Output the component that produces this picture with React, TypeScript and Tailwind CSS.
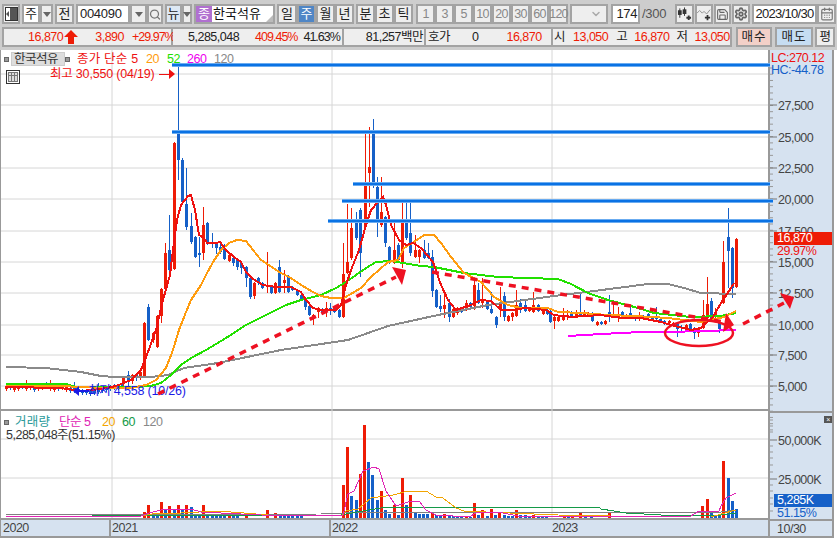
import React from "react";
import { CalendarDays, ChevronDown, Save, Search, Settings } from "lucide-react";

const RED = "#ee1c06";
const BLUE = "#1560c8";

// [x, bodyTop, bodyBottom, wickTop, wickBottom, color]
type Candle = [number, number, number, number, number, "r" | "b"];

const flatYs = [387, 386, 388, 387, 385, 387, 386, 388, 387, 386, 384, 387, 388, 387, 386, 388, 389, 389, 390, 391, 391, 392, 391, 390, 389, 388, 387, 386, 386, 385];
const flatCandles: Candle[] = flatYs.map((y, i) => [5 + i * 4.0, y - 1, y + 2, i % 6 === 5 ? y - 7 : y - 2, y + 4, i % 3 === 1 || i > 15 ? "b" : "r"]);

const candles: Candle[] = [
  ...flatCandles,
  [122, 377, 383, 376, 386, "r"], [127, 375, 380, 371, 386, "b"], [131, 375, 381, 374, 384, "r"], [135, 375, 378, 373, 381, "b"],
  [139, 372, 377, 371, 380, "r"], [143, 323, 377, 322, 378, "r"], [147, 307, 340, 304, 341, "b"], [152, 333, 340, 332, 343, "r"],
  [156, 316, 347, 315, 348, "r"], [160, 289, 316, 288, 323, "r"], [164, 253, 289, 243, 291, "r"], [168, 250, 270, 215, 277, "b"],
  [173, 143, 269, 142, 270, "r"], [177, 132, 160, 67, 180, "b"], [181, 160, 202, 158, 205, "b"], [185, 204, 227, 168, 230, "b"],
  [190, 226, 242, 213, 244, "b"], [194, 237, 257, 236, 258, "b"], [198, 253, 255, 237, 267, "b"], [202, 225, 253, 207, 260, "r"],
  [206, 223, 243, 222, 245, "b"], [211, 242, 244, 233, 248, "b"], [215, 243, 248, 242, 254, "b"], [219, 247, 252, 243, 254, "b"],
  [223, 248, 259, 244, 260, "b"], [228, 255, 261, 254, 262, "r"], [232, 258, 263, 257, 266, "b"], [236, 260, 267, 258, 270, "b"],
  [240, 263, 268, 262, 274, "b"], [245, 267, 278, 266, 287, "b"], [249, 278, 297, 277, 299, "b"], [253, 283, 296, 282, 299, "r"],
  [257, 278, 283, 277, 285, "b"], [261, 283, 288, 282, 289, "b"], [266, 285, 287, 252, 293, "r"], [270, 287, 293, 286, 294, "b"],
  [274, 283, 293, 282, 294, "r"], [278, 267, 292, 260, 293, "b"], [283, 280, 283, 270, 293, "r"], [287, 277, 292, 275, 293, "b"],
  [291, 288, 290, 286, 291, "b"], [296, 290, 295, 289, 296, "b"], [300, 295, 299, 294, 300, "b"], [304, 298, 307, 297, 310, "b"],
  [308, 306, 315, 305, 316, "b"], [312, 315, 318, 314, 325, "r"], [317, 308, 312, 307, 318, "r"], [321, 309, 312, 308, 314, "b"],
  [325, 308, 310, 302, 317, "r"], [329, 308, 311, 303, 315, "b"], [333, 307, 312, 306, 313, "b"], [338, 310, 317, 309, 318, "b"],
  [342, 274, 317, 243, 318, "r"], [346, 262, 273, 204, 274, "r"], [350, 228, 258, 208, 260, "r"], [355, 221, 238, 212, 240, "b"],
  [359, 210, 253, 208, 277, "b"], [364, 182, 227, 133, 229, "r"], [368, 167, 173, 127, 207, "r"], [372, 133, 183, 119, 188, "b"],
  [376, 187, 219, 177, 237, "b"], [380, 212, 225, 177, 227, "r"], [384, 217, 243, 216, 247, "b"], [388, 247, 263, 246, 264, "b"],
  [393, 250, 263, 223, 264, "r"], [397, 245, 260, 243, 262, "b"], [401, 219, 264, 202, 268, "r"], [405, 219, 238, 203, 240, "b"],
  [409, 233, 253, 202, 256, "b"], [414, 250, 257, 235, 258, "r"], [418, 250, 257, 249, 263, "r"], [423, 250, 258, 240, 259, "b"],
  [427, 253, 258, 243, 259, "b"], [431, 257, 291, 250, 297, "b"], [435, 290, 307, 289, 308, "b"], [439, 306, 309, 295, 312, "b"],
  [443, 305, 309, 293, 318, "r"], [448, 303, 317, 299, 322, "b"], [452, 309, 317, 308, 318, "r"], [456, 308, 313, 307, 315, "r"],
  [460, 308, 312, 307, 313, "b"], [465, 303, 309, 300, 311, "r"], [469, 303, 307, 302, 308, "b"], [473, 285, 306, 277, 310, "r"],
  [477, 290, 303, 283, 304, "b"], [481, 300, 303, 278, 308, "r"], [486, 301, 309, 300, 310, "b"], [490, 309, 313, 292, 314, "b"],
  [495, 317, 325, 316, 328, "b"], [499, 302, 310, 287, 317, "r"], [503, 296, 317, 292, 321, "b"], [507, 316, 321, 315, 322, "r"],
  [511, 313, 317, 312, 321, "r"], [515, 305, 316, 290, 317, "r"], [519, 303, 307, 299, 313, "b"], [524, 305, 311, 299, 312, "b"],
  [528, 309, 311, 308, 312, "r"], [532, 305, 312, 292, 313, "r"], [537, 305, 311, 304, 312, "b"], [542, 310, 314, 309, 315, "r"],
  [546, 310, 314, 309, 315, "b"], [549, 311, 322, 310, 323, "b"], [553, 317, 321, 316, 329, "r"], [557, 317, 321, 315, 322, "r"],
  [562, 316, 320, 308, 321, "r"], [566, 315, 317, 310, 320, "r"], [570, 312, 317, 311, 318, "b"], [575, 314, 316, 310, 318, "r"],
  [579, 314, 316, 292, 317, "b"], [583, 314, 316, 310, 317, "r"], [587, 314, 316, 312, 317, "r"], [591, 313, 321, 312, 322, "b"],
  [596, 322, 325, 321, 326, "r"], [600, 322, 324, 321, 325, "b"], [604, 321, 324, 320, 325, "r"], [608, 312, 317, 295, 322, "b"],
  [612, 314, 317, 303, 318, "r"], [617, 314, 317, 307, 322, "r"], [621, 312, 317, 311, 318, "b"], [625, 315, 317, 314, 318, "r"],
  [629, 313, 318, 307, 319, "b"], [634, 317, 319, 316, 321, "b"], [638, 317, 318, 312, 321, "r"], [642, 316, 318, 315, 319, "b"],
  [647, 314, 317, 313, 318, "b"], [651, 317, 319, 316, 320, "b"], [655, 317, 319, 307, 320, "b"], [659, 319, 322, 318, 323, "b"],
  [663, 321, 324, 320, 325, "b"], [668, 321, 323, 320, 325, "r"], [672, 323, 326, 322, 327, "r"], [676, 324, 329, 323, 337, "b"],
  [680, 327, 328, 325, 333, "b"], [685, 325, 330, 324, 331, "r"], [689, 324, 329, 323, 330, "b"], [693, 328, 333, 327, 339, "b"],
  [697, 328, 333, 327, 337, "r"], [702, 315, 328, 300, 329, "r"], [706, 304, 318, 277, 319, "r"], [710, 301, 318, 298, 319, "b"],
  [714, 313, 317, 308, 318, "r"], [718, 323, 329, 322, 333, "b"], [722, 262, 303, 241, 304, "r"], [727, 237, 251, 208, 288, "b"],
  [731, 248, 288, 247, 298, "b"], [735, 239, 287, 238, 288, "r"],
];

const ma5 = "5,387 60,388 80,391 100,389 115,386 130,380 140,370 147,352 155,330 162,300 169,275 172,250 176,220 180,205 187,196 190,195 194,210 198,235 203,238 206,243 215,243 219,242 225,250 233,257 240,262 245,272 252,279 262,285 275,287 290,287 300,292 305,300 312,308 320,310 335,310 340,305 345,285 350,270 358,250 365,225 370,210 377,202 382,197 385,205 390,225 398,240 405,245 412,243 420,248 432,262 440,285 447,300 455,310 470,305 480,300 490,301 500,310 510,310 525,308 545,310 553,315 570,317 600,315 620,318 640,318 660,322 670,325 690,330 700,328 712,317 720,303 730,288 733,283";
const ma20 = "5,386 60,386 100,388 130,388 145,385 155,380 165,368 172,350 178,330 185,312 190,300 200,285 205,275 212,262 220,250 228,243 236,240 245,241 252,250 260,260 268,265 278,272 290,278 300,285 312,292 320,296 330,298 343,298 360,288 370,277 387,262 397,260 403,248 413,242 423,235 433,235 440,243 450,257 463,273 480,282 493,297 507,305 520,308 547,308 557,312 580,313 607,315 633,316 667,318 700,322 723,317 735,311";
const ma52 = "5,384 65,384 75,387 115,387 135,387 150,386 160,383 170,375 180,365 190,358 205,350 225,338 245,325 265,315 285,305 300,300 320,295 335,288 345,282 355,275 365,268 375,262 390,261 420,266 433,267 463,273 497,277 557,279 570,284 587,293 607,300 637,308 653,313 690,317 720,316 735,313";
const ma120 = "5,367 45,368 80,372 100,376 113,377 150,377 167,375 183,368 217,363 280,350 347,340 387,326 437,315 487,305 553,296 593,291 647,284 667,284 683,288 700,293 735,294";
const ma260 = "567,336 600,334 640,332 667,332 735,330";

type Bar = [number, number, "r" | "b"];
const bars: Bar[] = [
  [143, 513, "r"], [147, 506, "r"], [152, 514, "b"], [156, 515, "b"], [160, 503, "r"], [164, 511, "b"], [168, 507, "r"], [173, 510, "b"],
  [177, 506, "r"], [181, 510, "b"], [185, 506, "r"], [190, 508, "b"], [194, 516, "b"], [198, 516, "b"], [202, 506, "r"], [206, 515, "b"],
  [211, 516, "b"], [215, 516, "b"], [219, 516, "b"], [223, 516, "b"], [228, 517, "r"], [232, 517, "b"], [236, 517, "b"], [245, 517, "r"],
  [266, 511, "r"], [274, 514, "r"], [279, 517, "b"], [283, 517, "b"], [287, 517, "b"], [291, 517, "b"], [296, 517, "b"], [300, 517, "b"],
  [342, 486, "r"], [346, 448, "r"], [350, 497, "b"], [355, 501, "b"], [359, 475, "r"], [363, 426, "r"], [367, 463, "b"], [371, 476, "b"],
  [376, 501, "b"], [380, 492, "r"], [384, 511, "b"], [388, 515, "b"], [393, 506, "r"], [397, 516, "b"], [401, 479, "r"], [405, 506, "b"],
  [409, 496, "r"], [414, 514, "b"], [418, 515, "b"], [422, 515, "b"], [426, 515, "b"], [431, 514, "r"], [435, 516, "b"], [439, 517, "b"],
  [443, 515, "r"], [448, 517, "b"], [452, 517, "b"], [456, 518, "b"], [460, 518, "b"], [465, 518, "r"], [469, 518, "b"], [473, 504, "r"],
  [477, 516, "b"], [481, 511, "r"], [486, 517, "b"], [490, 510, "r"], [494, 516, "b"], [498, 513, "r"], [503, 516, "b"], [507, 517, "b"],
  [511, 517, "b"], [515, 511, "r"], [519, 516, "b"], [524, 516, "b"], [528, 517, "b"], [532, 516, "r"], [537, 517, "b"], [541, 517, "b"],
  [545, 517, "b"], [579, 513, "r"], [608, 513, "r"], [563, 518, "r"], [567, 518, "b"], [571, 518, "r"], [584, 518, "b"], [590, 518, "b"],
  [701, 507, "r"], [706, 500, "r"], [710, 514, "b"], [714, 516, "b"], [718, 516, "b"], [722, 462, "r"], [727, 479, "b"], [731, 502, "b"], [735, 510, "b"],
];

const volMa5 = "5,517 140,517 148,514 160,511 175,510 190,510 200,513 220,514 260,516 340,517 342,516 347,495 353,492 362,472 373,468 378,470 385,492 395,507 410,502 418,502 425,511 435,516 468,518 475,514 497,513 517,517 690,517 698,512 718,512 720,507 725,499 735,494";
const volMa20 = "5,518 140,517 157,514 180,514 217,512 243,514 267,516 340,517 345,512 357,510 370,499 392,496 407,492 425,492 435,498 442,499 455,509 463,512 485,513 557,516 660,518 710,518 720,515 735,511";
const volMa60 = "91,517 340,516 367,511 387,508 598,508 600,510 613,512 625,514 660,516 692,517 720,516 735,514";
const volMa120 = "5,516 320,515 343,514 367,513 720,513 735,511";

const priceTicks: [number, string][] = [
  [105, "27,500"], [137, "25,000"], [168, "22,500"], [199, "20,000"], [231, "17,500"], [262, "15,000"], [293, "12,500"], [325, "10,000"], [355, "7,500"], [386, "5,000"],
];
const gridYs = [74, 105, 137, 168, 199, 231, 262, 293, 325, 355, 386];
const gridXs = [111, 331, 551];
const trendLines = [
  { y: 65, x: 172, end: 770 },
  { y: 132, x: 172, end: 770 },
  { y: 184, x: 353, end: 770 },
  { y: 201, x: 342, end: 773 },
  { y: 221, x: 328, end: 773 },
];
const minorTicks = Array.from({ length: 59 }, (_, i) => 68 + i * 6.24);

const Cell = ({ className = "", children }: { className?: string; children?: React.ReactNode }) => (
  <div className={`h-[20px] flex items-center justify-center border-2 border-[#a3a3a3] text-[#222] shrink-0 ${className.includes("bg-") ? "" : "bg-[#eeeeee]"} ${className}`}>
    {children}
  </div>
);

const Caret = () => <div className="w-0 h-0 border-x-[4px] border-x-transparent border-t-[5px] border-t-[#666]" />;

const CandleIcon = () => (
  <svg width="16" height="14" viewBox="0 0 16 14">
    <path d="M3 1v10M8 0v9" stroke="#333" />
    <rect x="1" y="3" width="4" height="5" fill="#333" />
    <rect x="6" y="2" width="4" height="5" fill="#333" />
    <path d="M10 11h5M12.500 8.500v5" stroke="#333" strokeWidth="2" />
  </svg>
);

const LineIcon = () => (
  <svg width="16" height="14" viewBox="0 0 16 14" fill="none">
    <path d="M0 6l3-3 3 3 2-2 3 3 4-5" stroke="#888" />
    <path d="M9 11h6M12 8v6" stroke="#333" strokeWidth="2" />
  </svg>
);

const PanelIcon = () => (
  <svg width="13" height="14" viewBox="0 0 13 14">
    <rect x="0.500" y="0.500" width="12" height="13" fill="#fff" stroke="#333" />
    <rect x="5" y="1" width="7" height="12" fill="#555" />
    <path d="M1 7l3-3v6z" fill="#555" />
  </svg>
);

const UpArrow = () => (
  <svg width="14" height="14" viewBox="0 0 14 14" className="ml-[1px] shrink-0">
    <polygon points="7,0 14,7 10,7 10,14 4,14 4,7 0,7" fill={RED} />
  </svg>
);

const Toolbar = () => (
  <div className="flex items-center h-[20px] pl-[2px] text-[13px]">
    <Cell className="w-[18px]"><PanelIcon /></Cell>
    <Cell className="w-[18px] ml-[2px] bg-white">주</Cell>
    <Cell className="w-[13px]"><Caret /></Cell>
    <Cell className="w-[19px] ml-[2px]">전</Cell>
    <Cell className="w-[54px] ml-[2px] bg-white !justify-start pl-[2px] tracking-[-0.3px]">004090</Cell>
    <Cell className="w-[17px]"><Caret /></Cell>
    <Cell className="w-[16px]"><Search size={13} strokeWidth={2.5} color="#777" /></Cell>
    <Cell className="w-[17px] ml-[2px] bg-[#dde8f4]">뉴</Cell>
    <Cell className="w-[10px]"><Caret /></Cell>
    <Cell className="w-[81px] ml-[2px] bg-white !justify-start relative">
      <span className="w-[16px] h-[16px] bg-[#b070d0] text-white flex items-center justify-center">종</span>
      <span className="ml-[1px] text-[#111]">한국석유</span>
      <span className="absolute right-0 bottom-0 w-0 h-0 border-l-[7px] border-l-transparent border-b-[7px] border-b-[#bbb]" />
    </Cell>
    <Cell className="w-[20px] ml-[2px]">일</Cell>
    <Cell className="w-[19px] bg-[#4f86c6] !text-white">주</Cell>
    <Cell className="w-[19px]">월</Cell>
    <Cell className="w-[19px]">년</Cell>
    <Cell className="w-[19px] ml-[2px]">분</Cell>
    <Cell className="w-[19px]">초</Cell>
    <Cell className="w-[19px]">틱</Cell>
    <div className="flex ml-[3px]">
      {["1", "3", "5", "10", "20", "30", "60", "120"].map((n) => (
        <Cell key={n} className="w-[19px] !text-[#888] tracking-[-0.8px] text-[12.5px]">{n}</Cell>
      ))}
    </div>
    <Cell className="w-[38px] ml-[2px] !justify-end pr-[4px]"><ChevronDown size={12} color="#aaa" strokeWidth={3} /></Cell>
    <Cell className="w-[29px] ml-[3px] bg-white !justify-end pr-[1px] tracking-[-0.4px]">174</Cell>
    <span className="ml-[2px] w-[30px] text-[#555] tracking-[-0.3px] shrink-0">/300</span>
    <Cell className="w-[19px] ml-[3px]"><CandleIcon /></Cell>
    <Cell className="w-[18px] ml-[1px]"><LineIcon /></Cell>
    <Cell className="w-[17px] ml-[1px]"><Save size={15} color="#666" strokeWidth={2} /></Cell>
    <Cell className="w-[18px] ml-[1px]"><Settings size={14} color="#666" strokeWidth={3} /></Cell>
    <Cell className="w-[65px] ml-[2px] bg-white tracking-[-0.7px]">2023/10/30</Cell>
    <Cell className="w-[19px]"><CalendarDays size={14} color="#777" /></Cell>
  </div>
);

const r = "text-[#ee1c06]";

const QuoteBar = () => (
  <div className="flex items-center h-[20px] mt-[3px] pl-[2px] text-[12.5px] tracking-[-0.5px] text-[#222]">
    <Cell className="w-[171px] !justify-start pl-[24px] !text-[#ee1c06]">
      <span>16,870</span>
      <UpArrow />
      <span className="ml-[17px]">3,890</span>
      <span className="ml-[8px] tracking-[-1px]">+29.97%</span>
    </Cell>
    <Cell className="w-[171px] !justify-start pl-[15px] border-l-0">
      <span>5,285,048</span>
      <span className={`ml-[16px] tracking-[-1px] ${r}`}>409.45%</span>
      <span className="ml-[6px] tracking-[-1px]">41.63%</span>
    </Cell>
    <Cell className="w-[82px] !justify-end pr-[1px] border-l-0">81,257백만</Cell>
    <Cell className="w-[127px] !justify-start pl-[2px] border-l-0">
      <span>호가</span>
      <span className="ml-[22px]">0</span>
      <span className={`ml-[28px] ${r}`}>16,870</span>
    </Cell>
    <Cell className="w-[179px] !justify-start pl-[1px] border-l-0">
      <span>시</span>
      <span className={`ml-[8px] ${r}`}>13,050</span>
      <span className="ml-[8px]">고</span>
      <span className={`ml-[7px] ${r}`}>16,870</span>
      <span className="ml-[7px]">저</span>
      <span className={`ml-[7px] ${r}`}>13,050</span>
    </Cell>
    <Cell className="w-[36px] ml-[4px] bg-[#f3d0c8] tracking-[1px]">매수</Cell>
    <Cell className="w-[38px] ml-[3px] bg-[#c6ddf2] tracking-[1px]">매도</Cell>
    <Cell className="w-[20px] ml-[2px]">평</Cell>
  </div>
);

const line = (points: string, color: string, width = 2) => (
  <polyline points={points} fill="none" stroke={color} strokeWidth={width} shapeRendering="crispEdges" />
);

const PriceChart = () => (
  <svg width="768" height="361" viewBox="0 50 768 361" className="absolute left-0 top-0">
    {gridYs.map((y) => <line key={y} x1="0" x2="768" y1={y} y2={y} stroke="#d6d6d6" />)}
    {gridXs.map((x) => <line key={x} x1={x} x2={x} y1="50" y2="412" stroke="#d6d6d6" />)}
    {candles.map(([x, top, bottom, wickTop, wickBottom, c], i) => {
      const color = c === "r" ? RED : BLUE;
      return (
        <g key={i} shapeRendering="crispEdges">
          <line x1={x} x2={x} y1={wickTop} y2={wickBottom} stroke={color} />
          <rect x={x - 1.5} y={top} width="3" height={bottom - top} fill={color} />
        </g>
      );
    })}
    {line(ma120, "#8a8a8a")}
    {line(ma260, "#ff00ff")}
    {line(ma52, "#22e000")}
    {line(ma20, "#ff9c0e")}
    {line(ma5, "#ee1111")}
  </svg>
);

const VolumeChart = () => (
  <svg width="768" height="107" viewBox="0 412 768 107" className="absolute left-0 top-0">
    <line x1="0" x2="768" y1="440" y2="440" stroke="#d6d6d6" />
    <line x1="0" x2="768" y1="479" y2="479" stroke="#d6d6d6" />
    {gridXs.map((x) => <line key={x} x1={x} x2={x} y1="412" y2="519" stroke="#d6d6d6" />)}
    {bars.map(([x, y, c], i) => (
      <rect key={i} x={x - 1.500} y={y} width="3" height={519 - y} fill={c === "r" ? RED : BLUE} shapeRendering="crispEdges" />
    ))}
    {line(volMa120, "#808080", 1)}
    {line(volMa60, "#149a48", 1)}
    {line(volMa20, "#f2a400", 1)}
    {line(volMa5, "#e024b4", 1)}
  </svg>
);

// trend lines, dashed arrows and the circle, drawn by hand over the chart and its axis
const Annotations = () => (
  <svg width="834" height="361" viewBox="0 50 834 361" className="absolute left-0 top-0 pointer-events-none">
    {trendLines.map((t) => (
      <g key={t.y}>
        <line x1={t.x} x2={t.end} y1={t.y} y2={t.y} stroke="#8cc0f4" strokeWidth="4" />
        <line x1={t.x} x2={t.end} y1={t.y} y2={t.y} stroke="#0a72e4" strokeWidth="2.500" />
      </g>
    ))}
    <g fill="none" stroke="#ee1122" strokeWidth="3.500" strokeDasharray="7 6">
      <line x1="158" y1="394" x2="396" y2="277" />
      <line x1="432" y1="272" x2="724" y2="322" />
      <line x1="743" y1="324" x2="784" y2="303" />
    </g>
    <ellipse cx="699" cy="333" rx="34" ry="13" fill="none" stroke="#ee1122" strokeWidth="2.500" />
    <polygon points="392,267 406,270 402,285" fill="#ee1122" />
    <polygon points="726,313 734,325 723,332" fill="#ee1122" />
    <polygon points="780,293 794,297 790,309" fill="#ee1122" />
  </svg>
);

const AxisLabels = () => (
  <svg width="65" height="469" viewBox="769 50 65 469" className="absolute left-0 top-0" fontSize="12.500" fill="#444">
    {minorTicks.map((y) => <line key={y} x1="769" x2="772" y1={y} y2={y} stroke="#999" />)}
    {priceTicks.map(([y, label]) => (
      <g key={label}>
        <line x1="769" x2="776" y1={y} y2={y} stroke="#777" />
        <text x="777" y={y + 5} letterSpacing="-0.5">{label}</text>
      </g>
    ))}
    {[420, 426, 432, 446, 452, 458, 465, 472, 485, 491, 498, 504, 511].map((y) => (
      <line key={y} x1="769" x2="772" y1={y} y2={y} stroke="#999" />
    ))}
    {[[440, "50,000K"], [479, "25,000K"]].map(([y, label]) => (
      <g key={label}>
        <line x1="769" x2="776" y1={y} y2={y} stroke="#777" />
        <text x="777" y={Number(y) + 5} letterSpacing="-0.5">{label}</text>
      </g>
    ))}
  </svg>
);

const Dot = () => <span className="w-[5px] h-[5px] bg-[#999] border border-[#666] shrink-0" />;

const TableIcon = () => (
  <svg width="14" height="14" viewBox="0 0 14 14" fill="none" stroke="#333">
    <rect x="0.500" y="0.500" width="13" height="13" />
    <rect x="2.500" y="2.500" width="9" height="9" fill="#ddd" stroke="#777" />
    <path d="M5.500 3v8M8.500 3v8M3 5.500h8" stroke="#777" />
  </svg>
);

export default function App() {
  return (
    <div className="w-[837px] h-[540px] overflow-hidden bg-white font-['Liberation_Sans','Noto_Sans_CJK_KR',sans-serif]">
      <div className="bg-[#cdcdcd] pt-[4px] pb-[3px] h-[50px]">
        <Toolbar />
        <QuoteBar />
      </div>
      <div className="relative flex w-[834px] h-[488px] border-b-2 border-[#999] text-[12.5px] tracking-[-0.5px]">
        <div className="w-[769px] flex flex-col border-l-2 border-[#999] -ml-px shrink-0">
          <div className="relative h-[362px] border-b-2 border-[#999]">
            <PriceChart />
            <div className="absolute left-[3px] top-[2px] flex items-center h-[14px] whitespace-nowrap">
              <Dot />
              <span className="ml-[2px] bg-[#dddddd] border border-[#ccc] px-[2px] h-[14px] leading-[13px] text-[#333] w-[54px]">한국석유</span>
              <Dot />
              <span className="ml-[7px] w-[62px] text-[#ee1111] tracking-[0.2px]">종가 단순 5</span>
              <span className="ml-[7px] w-[13px] text-[#ff9c0e]">20</span>
              <span className="ml-[8px] w-[12px] text-[#22e000]">52</span>
              <span className="ml-[8px] w-[17px] text-[#ee00ee]">260</span>
              <span className="ml-[10px] text-[#888]">120</span>
            </div>
            <div className="absolute left-[5px] top-[20px]"><TableIcon /></div>
            <div className="absolute left-[49px] top-[15px] flex items-center whitespace-nowrap text-[#ee1111] tracking-[-0.2px]">
              <span>최고 30,550 (04/19)</span>
              <span className="ml-[5px] w-[10px] h-px bg-[#ee1111]" />
              <span className="w-0 h-0 border-y-[5px] border-y-transparent border-l-[6px] border-l-[#ee1111]" />
            </div>
            <div className="absolute left-[72px] top-[332px] flex items-center whitespace-nowrap text-[#1a1ae6] tracking-[-0.2px]">
              <span className="w-0 h-0 border-y-[5px] border-y-transparent border-r-[6px] border-r-[#1a1ae6]" />
              <span className="w-[10px] h-[2px] bg-[#1a1ae6]" />
              <span className="ml-[-1px]">최저 4,558 (10/26)</span>
            </div>
          </div>
          <div className="relative h-[107px]">
            <VolumeChart />
            <div className="absolute left-[3px] top-[2px] flex items-center whitespace-nowrap">
              <Dot />
              <span className="ml-[6px] w-[37px] text-[#2a9a9a] tracking-[0.2px]">거래량</span>
              <span className="ml-[7px] w-[36px] text-[#e024b4]">단순 5</span>
              <span className="ml-[7px] w-[12px] text-[#f2a400]">20</span>
              <span className="ml-[8px] w-[12px] text-[#149a48]">60</span>
              <span className="ml-[9px] text-[#888]">120</span>
            </div>
            <div className="absolute left-[5px] top-[15px] text-[#333] whitespace-nowrap">5,285,048주(51.15%)</div>
          </div>
          <div className="flex-1 flex bg-[#d6e2f0] border-t-2 border-[#999] text-[#444] leading-[16px]">
            <span className="w-[110px] pl-[2px] border-r-2 border-[#999]">2020</span>
            <span className="w-[220px] pl-[1px] border-r-2 border-[#999]">2021</span>
            <span className="w-[220px] pl-[1px]">2022</span>
            <span className="pl-[1px]">2023</span>
          </div>
        </div>
        <div className="relative flex-1 flex flex-col bg-[#d6e2f0] border-x-2 border-[#999]">
          <AxisLabels />
          <div className="absolute left-[1px] top-[2px] text-[#ee1111] leading-[12px] whitespace-nowrap">LC:270.12</div>
          <div className="absolute left-[1px] top-[14px] text-[#1560c8] leading-[12px] whitespace-nowrap">HC:-44.78</div>
          <div className="absolute left-[4px] top-[182px] w-[58px] h-[13px] bg-[#ee1c06] text-white leading-[13px] pl-[3px]">16,870</div>
          <div className="absolute left-[7px] top-[195px] text-[#ee1111] leading-[12px]">29.97%</div>
          <div className="absolute left-[54px] top-[366px] w-[8px] h-[7px] bg-[#555] text-white text-[7px] leading-[7px] text-center">×</div>
          <div className="absolute left-[4px] top-[444px] w-[58px] h-[13px] bg-[#1560c8] text-white leading-[13px] pl-[3px]">5,285K</div>
          <div className="absolute left-[7px] top-[457px] text-[#1560c8] leading-[12px]">51.15%</div>
          <div className="absolute left-0 right-0 top-[361px] h-[2px] bg-[#999]" />
          <div className="absolute left-0 right-0 top-[469px] h-[17px] border-t-2 border-[#999] pl-[7px] text-[#444] leading-[16px]">10/30</div>
        </div>
        <Annotations />
      </div>
    </div>
  );
}
